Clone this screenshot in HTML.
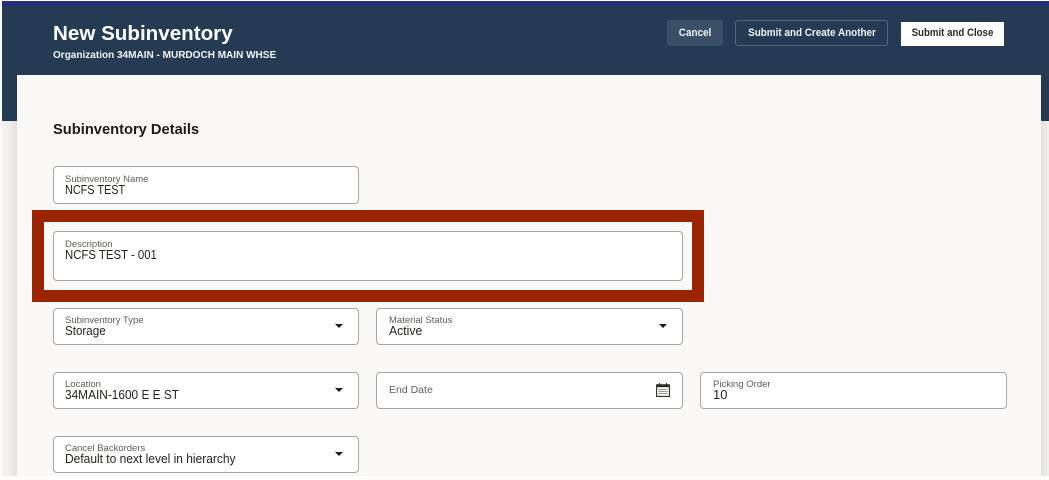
<!DOCTYPE html>
<html><head><meta charset="utf-8">
<style>
html,body{margin:0;padding:0;background:#fff;}
body{width:1049px;height:480px;position:relative;overflow:hidden;font-family:"Liberation Sans",sans-serif;color:#1e1c1a;}
.a{position:absolute;}
.f{position:absolute;background:#fff;border:1px solid #a8a6a3;border-radius:4px;box-sizing:border-box;}
.l{position:absolute;left:11px;top:6px;font-size:9.5px;line-height:11px;color:#5f5c59;white-space:nowrap;}
.v{position:absolute;left:11px;top:14px;font-size:13px;line-height:15px;color:#25231f;white-space:nowrap;transform-origin:0 50%;}
.c{position:absolute;width:0;height:0;border-left:4.5px solid transparent;border-right:4.5px solid transparent;border-top:4.5px solid #1c1a18;top:15px;right:15px;}
.b{position:absolute;box-sizing:border-box;font-size:11px;font-weight:bold;text-align:center;white-space:nowrap;}
.b span{display:inline-block;transform:scaleX(.9);}
.t1{top:6.5px;}.v1{top:15px;}
</style></head><body>
<div class="a" style="left:2px;top:121px;width:1047px;height:355px;background:#f3f2f1;"></div>
<div class="a" style="left:2px;top:1px;width:1047px;height:120px;background:#253b54;"></div>
<div class="a" style="left:2px;top:1px;width:1047px;height:5px;background:#22307a;"></div>
<div class="a" style="left:7px;top:121px;width:10px;height:355px;background:linear-gradient(90deg,#f3f2f1,#e2e1df);"></div>
<div class="a" style="left:1041px;top:121px;width:8px;height:355px;background:linear-gradient(90deg,#e2e1df,#f1f0ef);"></div>
<div class="a" style="left:17px;top:75px;width:1024px;height:401px;background:#faf9f7;"></div>

<div class="a" style="left:53px;top:21px;font-size:20.6px;line-height:26px;font-weight:bold;color:#fff;white-space:nowrap;">New Subinventory</div>
<div class="a" style="left:53px;top:49px;font-size:10.03px;line-height:13px;font-weight:bold;color:#f2f4f6;white-space:nowrap;">Organization 34MAIN - MURDOCH MAIN WHSE</div>

<div class="b" style="left:667px;top:20px;width:56px;height:26px;line-height:27px;background:#3a4f68;border-radius:3px;color:#f0f2f4;"><span>Cancel</span></div>
<div class="b" style="left:735px;top:20px;width:153px;height:26px;line-height:25px;border:1px solid #55677f;border-radius:3px;color:#f0f2f4;"><span>Submit and Create Another</span></div>
<div class="b" style="left:901px;top:22px;width:103px;height:24px;line-height:23px;background:#fff;color:#2b2a28;"><span style="transform:scaleX(.88)">Submit and Close</span></div>

<div class="a" style="left:53px;top:122px;font-size:14.7px;line-height:17px;font-weight:bold;color:#1d1b19;white-space:nowrap;">Subinventory Details</div>

<div class="f" style="left:53px;top:166px;width:306px;height:38px;"><div class="l t1">Subinventory Name</div><div class="v v1" style="transform:scaleX(.835)">NCFS TEST</div></div>

<div class="a" style="left:32px;top:210px;width:672px;height:92px;box-sizing:border-box;border:12px solid #9a2500;background:#faf9f7;"></div>
<div class="f" style="left:53px;top:231px;width:630px;height:50px;"><div class="l t1">Description</div><div class="v v1" style="transform:scaleX(.875)">NCFS TEST - 001</div></div>

<div class="f" style="left:53px;top:308px;width:306px;height:37px;"><div class="l">Subinventory Type</div><div class="v" style="transform:scaleX(.893)">Storage</div><div class="c"></div></div>
<div class="f" style="left:376px;top:308px;width:307px;height:37px;"><div class="l" style="left:12px">Material Status</div><div class="v" style="left:12px;transform:scaleX(.94)">Active</div><div class="c"></div></div>

<div class="f" style="left:53px;top:372px;width:306px;height:37px;"><div class="l">Location</div><div class="v" style="transform:scaleX(.912)">34MAIN-1600 E E ST</div><div class="c"></div></div>
<div class="f" style="left:376px;top:372px;width:307px;height:37px;"><div class="l" style="left:12px;top:11px;font-size:10.5px;line-height:12px;">End Date</div>
<svg class="a" style="left:279px;top:10px;" width="14" height="14" viewBox="0 0 14 14"><rect x="0.6" y="1.8" width="12.8" height="11.6" fill="none" stroke="#2a2825" stroke-width="1.1"/><rect x="0.6" y="1.8" width="12.8" height="2.4" fill="#2a2825"/><path d="M3.5 0v3M10.5 0v3" stroke="#2a2825" stroke-width="1.1"/><path d="M2.5 6.5h9M2.5 8.5h9M2.5 10.5h9" stroke="#77756f" stroke-width="1"/><path d="M4 5.5v6.5M6 5.5v6.5M8 5.5v6.5M10 5.5v6.5" stroke="#fff" stroke-width=".5"/></svg>
</div>
<div class="f" style="left:700px;top:372px;width:307px;height:37px;"><div class="l" style="left:12px">Picking Order</div><div class="v" style="left:12px">10</div></div>

<div class="f" style="left:53px;top:436px;width:306px;height:37px;"><div class="l">Cancel Backorders</div><div class="v" style="transform:scaleX(.922)">Default to next level in hierarchy</div><div class="c"></div></div>
</body></html>
